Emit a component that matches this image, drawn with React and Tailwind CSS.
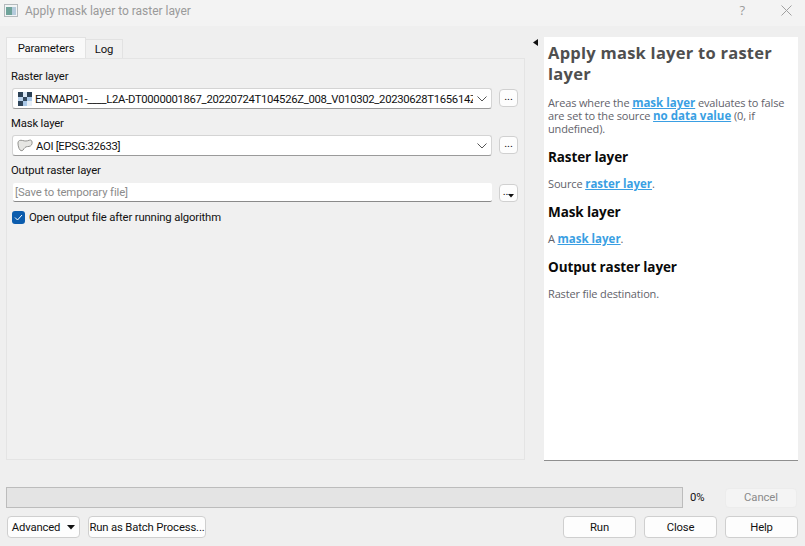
import React from "react";

const font = "font-['Open_Sans','Noto_Sans',sans-serif]";
const uiText = "font-['Roboto',sans-serif] text-[11.3px] tracking-[-0.15px] text-[#111]";

const RasterIcon = () => (
  <svg width="14" height="14" viewBox="0 0 14 14" shapeRendering="crispEdges" className="shrink-0">
    <rect x="0" y="0" width="5" height="5" fill="#2c4257" />
    <rect x="5" y="0" width="4" height="5" fill="#dbe8f5" />
    <rect x="9" y="0" width="5" height="5" fill="#2c4257" />
    <rect x="0" y="5" width="5" height="4" fill="#b9d2ec" />
    <rect x="5" y="5" width="4" height="4" fill="#34495e" />
    <rect x="9" y="5" width="5" height="4" fill="#a9c8e8" />
    <rect x="0" y="9" width="5" height="5" fill="#2f455b" />
    <rect x="5" y="9" width="4" height="5" fill="#a9c8e8" />
    <rect x="9" y="9" width="5" height="5" fill="#e6eff8" />
  </svg>
);

const PolygonIcon = () => (
  <svg width="16" height="13" viewBox="0 0 17 13" preserveAspectRatio="none" className="shrink-0 -ml-px">
    <path d="M1 4 C1 1.5 3.5 0.8 6 1.5 C8.5 2.2 10.5 2.2 13 1.2 C15.2 0.6 16.4 2 16 4.5 C15.6 6.8 13.5 7.6 11 7.6 C9 7.6 7.8 9 6.5 11 C5.2 12.4 3.2 11.8 2.2 9.5 C1.5 7.8 1 6 1 4 Z" fill="#e6e6e3" stroke="#8f8f8c" strokeWidth="1" />
  </svg>
);

const Chevron = () => (
  <svg width="10" height="6" viewBox="0 0 10 6" fill="none" stroke="#555" strokeWidth="1" className="shrink-0">
    <path d="M0.5 0.5 L5 5 L9.5 0.5" />
  </svg>
);

const DotsButton = ({ menu }) => (
  <div className={`relative w-[19px] h-[18px] shrink-0 rounded-[4px] border border-[#d0d0d0] bg-[#fdfdfd] flex items-center justify-center ${menu ? "" : "-mt-px"}`}>
    <span className={`${uiText} leading-none -mt-[2px] ${menu ? "-ml-[3px]" : ""}`}>...</span>
    {menu && (
      <svg width="6" height="4" viewBox="0 0 6 4" className="absolute right-[3px] bottom-[3px]">
        <path d="M0 0 H6 L3 3.5 Z" fill="#111" />
      </svg>
    )}
  </div>
);

const Combo = ({ icon, text }) => (
  <div className="flex items-center gap-[7px] ml-px">
    <div className="flex-1 min-w-0 h-[21px] rounded-[3px] border border-[#d4d4d4] border-b-[#9a9a9a] bg-white flex items-center pl-[5px] pr-[4px]">
      {icon}
      <span className={`${uiText} ml-[3px] pt-px flex-1 min-w-0 overflow-hidden whitespace-nowrap leading-[15px]`}>
        <span className="tracking-[-0.32px]">{text}</span>
      </span>
      <span className="ml-[4px]"><Chevron /></span>
    </div>
    <DotsButton />
  </div>
);

const Label = ({ children }) => (
  <div className={`${uiText} leading-[16px] pt-px h-[16px]`}>{children}</div>
);

const Btn = ({ children, className = "" }) => (
  <div className={`h-[22px] pt-px rounded-[4px] border border-[#cfcfcf] bg-[#fdfdfd] flex items-center justify-center whitespace-nowrap ${uiText} leading-none ${className}`}>
    {children}
  </div>
);

const HelpLink = ({ children }) => (
  <span className="font-bold text-[11.5px] tracking-[0] text-[#3a9fe3] underline">{children}</span>
);

const HelpHeading = ({ children }) => (
  <div className="text-[13.5px] leading-[18px] font-bold text-[#0a0a0a] tracking-[-0.1px]">{children}</div>
);

const HelpText = ({ children }) => (
  <div className="text-[11px] leading-[13px] text-[#62626a] tracking-[-0.15px]">{children}</div>
);

export default function App() {
  return (
    <div className={`${font} w-[805px] h-[546px] overflow-hidden bg-[#efefef] flex flex-col`}>
      {/* title bar */}
      <div className="h-[26px] shrink-0 bg-[#f3f3f3] flex items-center pl-[4px] pb-[5px]">
        <svg width="14" height="13" viewBox="0 0 14 13" className="shrink-0">
          <rect x="0.5" y="0.5" width="13" height="12" fill="#f2f4f5" stroke="#b4babd" />
          <rect x="2" y="3" width="6" height="8" fill="#6fa39a" />
          <rect x="8" y="3" width="4" height="8" fill="#b5cbdc" />
        </svg>
        <span className="ml-[7px] font-['Roboto',sans-serif] text-[12px] tracking-[-0.02px] text-[#9a9a9a] leading-none">Apply mask layer to raster layer</span>
        <span className="ml-auto text-[13px] text-[#9c9c9c] leading-none mr-[36px]">?</span>
        <svg width="11" height="11" viewBox="0 0 11 11" stroke="#a0a0a0" strokeWidth="1" className="mr-[13px]">
          <path d="M0.5 0.5 L10.5 10.5 M10.5 0.5 L0.5 10.5" />
        </svg>
      </div>

      {/* main area */}
      <div className="h-[435px] shrink-0 flex pt-[11px] pl-[6px] pr-[7px]">
        <div className="w-[519px] shrink-0 flex flex-col">
          <div className="flex items-end h-[21px]">
            <div className={`${uiText} h-[21px] w-[80px] pt-px bg-[#f9f9f9] border border-b-0 border-[#e2e2e2] flex items-center justify-center leading-none`}>Parameters</div>
            <div className={`${uiText} h-[19px] w-[37px] pt-px bg-[#f0f0f0] border border-l-0 border-b-0 border-[#e2e2e2] flex items-center justify-center leading-none`}>Log</div>
          </div>
          <div className="h-[402px] border border-[#e4e4e4] bg-[#f0f0f0] flex flex-col pt-[9px] pl-[4px] pr-[6px]">
            <Label>Raster layer</Label>
            <div className="mt-[4px]">
              <Combo icon={<RasterIcon />} text="ENMAP01-____L2A-DT0000001867_20220724T104526Z_008_V010302_20230628T165614Z.TIF" />
            </div>
            <div className="mt-[6px]">
              <Label>Mask layer</Label>
            </div>
            <div className="mt-[4px]">
              <Combo icon={<PolygonIcon />} text="AOI [EPSG:32633]" />
            </div>
            <div className="mt-[6px]">
              <Label>Output raster layer</Label>
            </div>
            <div className="mt-[5px] flex items-center gap-[7px] ml-[2px]">
              <div className="flex-1 h-[19px] pt-px bg-white border-b border-[#8a8a8a] rounded-[2px] flex items-center pl-[2px]">
                <span className="font-['Roboto',sans-serif] text-[11.3px] tracking-[-0.1px] text-[#8b8b8b] leading-none">[Save to temporary file]</span>
              </div>
              <DotsButton menu />
            </div>
            <div className="mt-[9px] flex items-center gap-[4px] pl-px">
              <div className="w-[13px] h-[13px] rounded-[3px] bg-[#0b5cad] flex items-center justify-center">
                <svg width="9" height="7" viewBox="0 0 9 7" fill="none" stroke="#fff" strokeWidth="1">
                  <path d="M1 3.5 L3.5 6 L8 1" />
                </svg>
              </div>
              <span className={`${uiText} leading-none`}>Open output file after running algorithm</span>
            </div>
          </div>
        </div>

        {/* splitter */}
        <div className="w-[19px] shrink-0 pt-[2px] pl-[7px]">
          <svg width="5" height="7" viewBox="0 0 5 7" className="ml-px">
            <path d="M5 0 V7 L0 3.5 Z" fill="#111" />
          </svg>
        </div>

        {/* help panel */}
        <div className="w-[254px] h-[424px] shrink-0 bg-white border-b border-[#8f8f8f] pt-[5px] pl-[4px] pr-[6px] flex flex-col">
          <div className="text-[16.5px] leading-[21px] font-bold text-[#4f4f4f] tracking-[0.25px]">Apply mask layer to raster layer</div>
          <div className="mt-[12px]">
            <HelpText>Areas where the <HelpLink>mask layer</HelpLink> evaluates to false are set to the source <HelpLink>no data value</HelpLink> (0, if undefined).</HelpText>
          </div>
          <div className="mt-[13px]"><HelpHeading>Raster layer</HelpHeading></div>
          <div className="mt-[11px]"><HelpText>Source <HelpLink>raster layer</HelpLink>.</HelpText></div>
          <div className="mt-[13px]"><HelpHeading>Mask layer</HelpHeading></div>
          <div className="mt-[11px]"><HelpText>A <HelpLink>mask layer</HelpLink>.</HelpText></div>
          <div className="mt-[13px]"><HelpHeading>Output raster layer</HelpHeading></div>
          <div className="mt-[11px]"><HelpText>Raster file destination.</HelpText></div>
        </div>
      </div>

      {/* progress row */}
      <div className="mt-[26px] flex items-center pl-[6px]">
        <div className="w-[677px] h-[21px] bg-[#e4e4e4] border border-[#bcbcbc]" />
        <span className={`${uiText} ml-[7px] pt-px leading-none`}>0%</span>
        <div className="ml-[auto] mr-[8px] w-[72px] h-[20px] pt-px rounded-[4px] border border-[#ececec] bg-[#f4f4f4] flex items-center justify-center font-['Roboto',sans-serif] text-[11.3px] tracking-[-0.1px] text-[#8a8a8a] leading-none">Cancel</div>
      </div>

      {/* buttons row */}
      <div className="mt-[8px] flex items-center pl-[7px] pr-[7px]">
        <Btn className="w-[73px] gap-[7px]">
          Advanced
          <svg width="8" height="5" viewBox="0 0 8 5"><path d="M0 0 H8 L4 4.5 Z" fill="#111" /></svg>
        </Btn>
        <Btn className="w-[118px] ml-[8px]">Run as Batch Process...</Btn>
        <Btn className="w-[73px] ml-auto">Run</Btn>
        <Btn className="w-[73px] ml-[8px]">Close</Btn>
        <Btn className="w-[73px] ml-[8px]">Help</Btn>
      </div>
    </div>
  );
}
